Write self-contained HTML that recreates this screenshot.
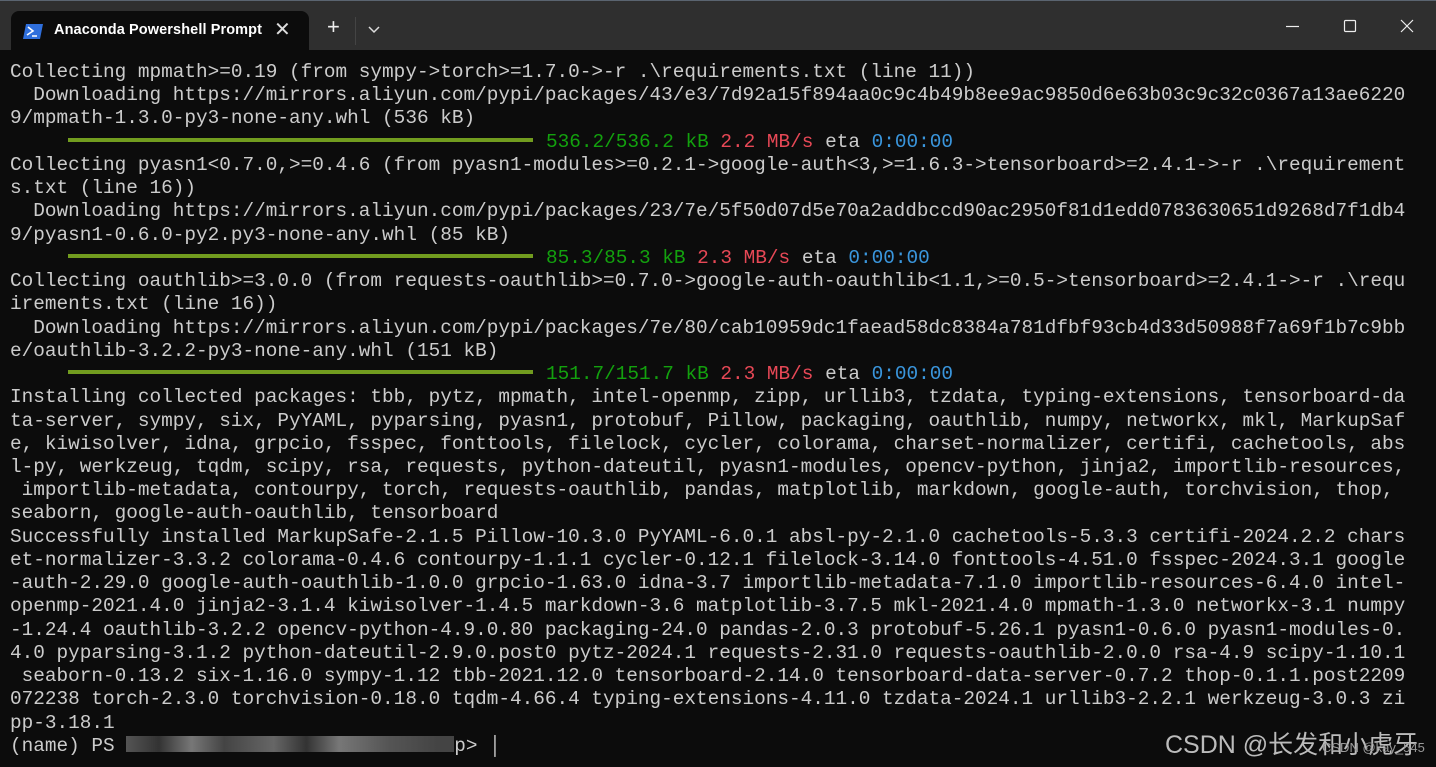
<!DOCTYPE html>
<html><head><meta charset="utf-8"><style>
html,body{margin:0;padding:0}
body{width:1436px;height:767px;background:#0c0c0c;position:relative;overflow:hidden;font-family:"Liberation Sans",sans-serif}
.top{position:absolute;left:0;top:0;width:1436px;height:50px;background:#2f2f2f;border-top:1px solid #5a6470;box-sizing:border-box}
.tab{position:absolute;left:11px;top:10px;width:298px;height:40px;background:#0c0c0c;border-radius:8px 8px 0 0}
.tab .t{position:absolute;left:43px;top:11px;color:#fff;font-size:14.5px;font-weight:bold;letter-spacing:0.1px}
.ic{position:absolute;left:12px;top:13px}
.x{position:absolute;left:263px;top:6px;color:#ddd;font-size:20px}
.plus{position:absolute;left:327px;top:15px;color:#eee;font-size:22px;line-height:22px}
.sep{position:absolute;left:355px;top:16px;width:1px;height:28px;background:#444}
.chev{position:absolute;left:367px;top:24px}
.wc{position:absolute;top:18px}
pre{position:absolute;left:10px;top:61px;margin:0;font-family:"Liberation Mono",monospace;font-size:19.39px;line-height:23.24px;color:#cccccc;white-space:pre}
.g{color:#13a10e}.r{color:#e74856}.b{color:#3a96dd}
.bar{display:inline-block;width:465px;height:4px;background:#729c1f;vertical-align:middle;margin-left:58px;margin-right:13px;position:relative;top:-2px}
.blur{display:inline-block;width:328px;height:16px;background:linear-gradient(90deg,#555,#333 10%,#777 20%,#444 30%,#666 45%,#333 55%,#777 65%,#555 80%,#444 95%);vertical-align:middle;margin-top:-4px}
.wm{position:absolute;left:1165px;top:725px;color:#bbb;font-size:25px;font-family:"Liberation Sans","Noto Sans CJK SC",sans-serif}
.wm2{position:absolute;left:1322px;top:740px;color:#999;font-size:13px}
</style></head><body>
<div class="top">
<div class="tab"><svg class="ic" width="20" height="15"><path d="M3 0 H20 L17 15 H0 Z" fill="#2f6fdc"/><path d="M5 3 L10 7 L4 11 M9 12 H14" stroke="#fff" stroke-width="1.6" fill="none"/></svg><div class="t">Anaconda Powershell Prompt</div><div class="x">✕</div></div>
<div class="plus">+</div><div class="sep"></div>
<svg class="chev" width="14" height="10"><path d="M2 2 L7 7 L12 2" stroke="#ddd" stroke-width="1.5" fill="none"/></svg>
<svg class="wc" style="left:1285px" width="16" height="16"><path d="M1 7.5 H14" stroke="#eee" stroke-width="1.2"/></svg>
<svg class="wc" style="left:1343px" width="16" height="16"><rect x="1.5" y="1.5" width="11" height="11" rx="1" fill="none" stroke="#eee" stroke-width="1.2"/></svg>
<svg class="wc" style="left:1400px" width="16" height="16"><path d="M1 1 L13 13 M13 1 L1 13" stroke="#eee" stroke-width="1.2"/></svg>
</div>
<pre>Collecting mpmath&gt;=0.19 (from sympy-&gt;torch&gt;=1.7.0-&gt;-r .\requirements.txt (line 11))
  Downloading https://mirrors.aliyun.com/pypi/packages/43/e3/7d92a15f894aa0c9c4b49b8ee9ac9850d6e63b03c9c32c0367a13ae6220
9/mpmath-1.3.0-py3-none-any.whl (536 kB)
<span class="bar"></span><span class="g">536.2/536.2 kB</span> <span class="r">2.2 MB/s</span> eta <span class="b">0:00:00</span>
Collecting pyasn1&lt;0.7.0,&gt;=0.4.6 (from pyasn1-modules&gt;=0.2.1-&gt;google-auth&lt;3,&gt;=1.6.3-&gt;tensorboard&gt;=2.4.1-&gt;-r .\requirement
s.txt (line 16))
  Downloading https://mirrors.aliyun.com/pypi/packages/23/7e/5f50d07d5e70a2addbccd90ac2950f81d1edd0783630651d9268d7f1db4
9/pyasn1-0.6.0-py2.py3-none-any.whl (85 kB)
<span class="bar"></span><span class="g">85.3/85.3 kB</span> <span class="r">2.3 MB/s</span> eta <span class="b">0:00:00</span>
Collecting oauthlib&gt;=3.0.0 (from requests-oauthlib&gt;=0.7.0-&gt;google-auth-oauthlib&lt;1.1,&gt;=0.5-&gt;tensorboard&gt;=2.4.1-&gt;-r .\requ
irements.txt (line 16))
  Downloading https://mirrors.aliyun.com/pypi/packages/7e/80/cab10959dc1faead58dc8384a781dfbf93cb4d33d50988f7a69f1b7c9bb
e/oauthlib-3.2.2-py3-none-any.whl (151 kB)
<span class="bar"></span><span class="g">151.7/151.7 kB</span> <span class="r">2.3 MB/s</span> eta <span class="b">0:00:00</span>
Installing collected packages: tbb, pytz, mpmath, intel-openmp, zipp, urllib3, tzdata, typing-extensions, tensorboard-da
ta-server, sympy, six, PyYAML, pyparsing, pyasn1, protobuf, Pillow, packaging, oauthlib, numpy, networkx, mkl, MarkupSaf
e, kiwisolver, idna, grpcio, fsspec, fonttools, filelock, cycler, colorama, charset-normalizer, certifi, cachetools, abs
l-py, werkzeug, tqdm, scipy, rsa, requests, python-dateutil, pyasn1-modules, opencv-python, jinja2, importlib-resources,
 importlib-metadata, contourpy, torch, requests-oauthlib, pandas, matplotlib, markdown, google-auth, torchvision, thop,
seaborn, google-auth-oauthlib, tensorboard
Successfully installed MarkupSafe-2.1.5 Pillow-10.3.0 PyYAML-6.0.1 absl-py-2.1.0 cachetools-5.3.3 certifi-2024.2.2 chars
et-normalizer-3.3.2 colorama-0.4.6 contourpy-1.1.1 cycler-0.12.1 filelock-3.14.0 fonttools-4.51.0 fsspec-2024.3.1 google
-auth-2.29.0 google-auth-oauthlib-1.0.0 grpcio-1.63.0 idna-3.7 importlib-metadata-7.1.0 importlib-resources-6.4.0 intel-
openmp-2021.4.0 jinja2-3.1.4 kiwisolver-1.4.5 markdown-3.6 matplotlib-3.7.5 mkl-2021.4.0 mpmath-1.3.0 networkx-3.1 numpy
-1.24.4 oauthlib-3.2.2 opencv-python-4.9.0.80 packaging-24.0 pandas-2.0.3 protobuf-5.26.1 pyasn1-0.6.0 pyasn1-modules-0.
4.0 pyparsing-3.1.2 python-dateutil-2.9.0.post0 pytz-2024.1 requests-2.31.0 requests-oauthlib-2.0.0 rsa-4.9 scipy-1.10.1
 seaborn-0.13.2 six-1.16.0 sympy-1.12 tbb-2021.12.0 tensorboard-2.14.0 tensorboard-data-server-0.7.2 thop-0.1.1.post2209
072238 torch-2.3.0 torchvision-0.18.0 tqdm-4.66.4 typing-extensions-4.11.0 tzdata-2024.1 urllib3-2.2.1 werkzeug-3.0.3 zi
pp-3.18.1
(name) PS <span class="blur"></span>p&gt; │</pre>
<div class="wm">CSDN @长发和小虎牙</div>
<div class="wm2">CSDN @kay_545</div>
</body></html>
